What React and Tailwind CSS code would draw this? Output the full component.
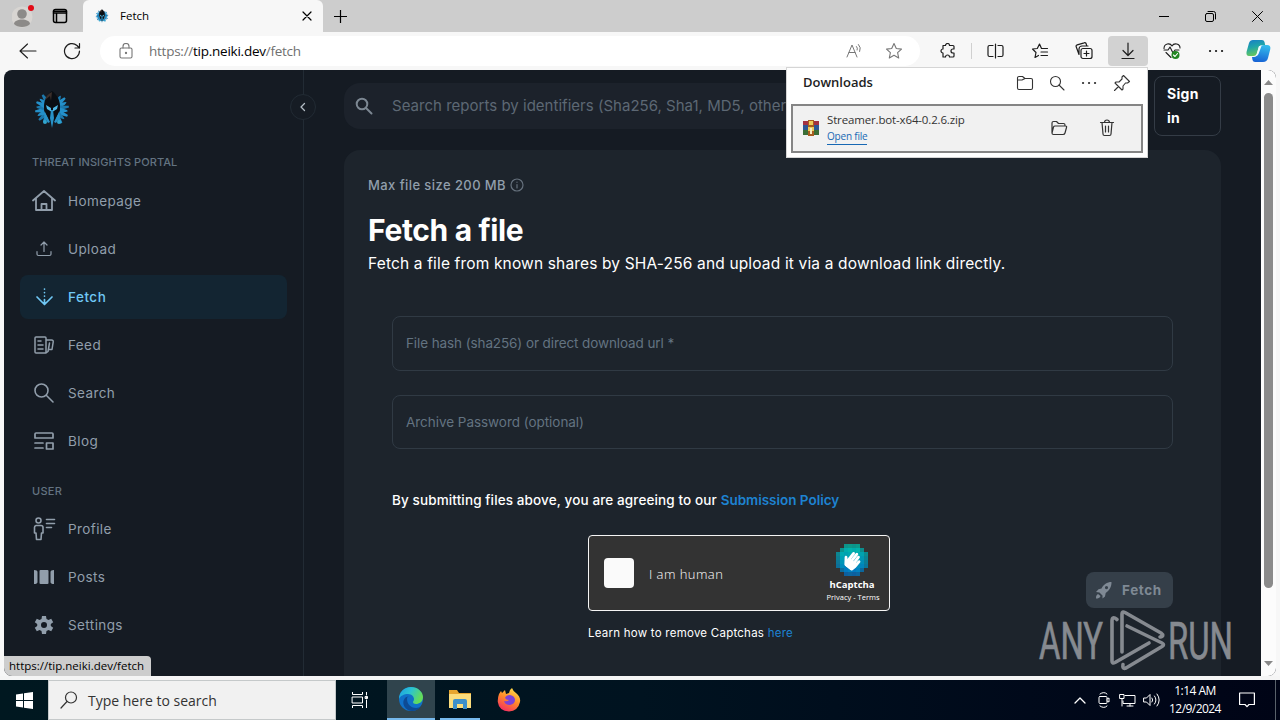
import { FaHandPaper } from 'react-icons/fa'

// Stroke icon, drawn in its own pixel units
const Icon = ({ w = 24, h = w, sw = 1, className = '', children }) => (
  <svg
    width={w}
    height={h}
    viewBox={`0 0 ${w} ${h}`}
    fill="none"
    stroke="currentColor"
    strokeWidth={sw}
    strokeLinecap="round"
    strokeLinejoin="round"
    className={`shrink-0 ${className}`}
  >
    {children}
  </svg>
)

// Feather angles round the hood, in degrees from the top
const feathers = [34, 50, 66, 82, 98, 114, 130, 146, 214, 230, 246, 262, 278, 294, 310, 326]

const Mascot = ({ size }) => (
  <svg width={size} height={size} viewBox="0 0 36 38" className="shrink-0">
    {feathers.map((angle, i) => (
      <path
        key={angle}
        d={i % 2 ? 'M15.500 11l1.500-9h2l1.500 9z' : 'M15.500 11l1.500-7 1-1 1 2 1.500 6z'}
        fill={i % 3 ? '#2490ca' : '#1c79ad'}
        transform={`rotate(${angle} 18 19)`}
      />
    ))}
    <path d="M18 1c-5 4-8 9-8 15 0 7 4 13 8 18 4-5 8-11 8-18 0-6-3-11-8-15z" fill="#0a0e13" />
    <path d="M18 2c-4 2-6 4-7 8l5-4 1 5z" fill="#3a2f2b" />
    <path d="M12 15l5 3v3.500l-4-2.500zM24 15l-5 3v3.500l4-2.500z" fill="#4fb9e6" />
    <path d="M17 20h2l1 8-2 10-2-10zM11 22l5 10-2 1-4-6zM25 22l-5 10 2 1 4-6z" fill="#2892c8" />
    <circle cx="11" cy="32" r="2" fill="#31a5ce" />
    <circle cx="25" cy="32" r="2" fill="#31a5ce" />
  </svg>
)

const TabBar = () => (
  <div className="flex h-8 shrink-0 bg-[#cdcdcd]">
    <div className="flex w-[83px] items-center rounded-br-md bg-[#cacaca] pl-3">
      <svg width="24" height="28" viewBox="0 0 24 28">
        <circle cx="10" cy="15" r="10.5" fill="#d8d5d2" />
        <circle cx="10" cy="12" r="4.800" fill="#8c8a88" />
        <path d="M2 22c0-6 16-6 16 0-3 4-13 4-16 0z" fill="#8c8a88" />
        <circle cx="19" cy="6" r="3" fill="#e20b17" />
      </svg>
      <Icon w={16} sw={1.5} className="ml-4 text-black">
        <rect x="1.5" y="1.5" width="13" height="13" rx="2" />
        <path d="M1.5 3.2h13M1.5 5h13M4.5 5v9" />
      </Icon>
    </div>
    <div className="flex w-60 items-center rounded-t-md bg-[#f7f7f7] pl-3">
      <Mascot size={14} />
      <span className="ml-[11px] flex-1 text-[11.5px] text-black">Fetch</span>
      <Icon w={10} sw={1.2} className="mr-[11px] text-black">
        <path d="M1 1l8 8M9 1l-8 8" />
      </Icon>
    </div>
    <div className="flex flex-1 items-center pl-[11px] text-black">
      <Icon w={13} sw={1.2}>
        <path d="M6.5 0v13M0 6.5h13" />
      </Icon>
      <div className="ml-auto flex items-center gap-9 pr-[17px]">
        <Icon w={10}><path d="M0 5.5h10" /></Icon>
        <Icon w={11}>
          <rect x=".5" y="2.5" width="8" height="8" rx="1.5" />
          <path d="M3 .5h5.500a2 2 0 0 1 2 2V8" />
        </Icon>
        <Icon w={11}><path d="M.5.5l10 10M10.500.5l-10 10" /></Icon>
      </div>
    </div>
  </div>
)

const Toolbar = () => (
  <div className="flex h-[38px] shrink-0 items-center bg-[#f7f7f7] text-[#1d1d1d]">
    <Icon w={18} sw={1.1} className="ml-[19px]">
      <path d="M17 9H1M8.500 2L1 9l7.500 7" />
    </Icon>
    <Icon w={18} sw={1.2} className="ml-[26px]">
      <path d="M16.500 9A7.500 7.500 0 1 1 14 3.500L16.300 6M16.500 1.500V6H12" />
    </Icon>
    <div className="ml-[19px] flex h-[30px] w-[820px] items-center rounded-full bg-white pl-[19px] pr-[17px] text-[#777]">
      <Icon w={14} h={16} sw={1.1}>
        <rect x="1" y="5" width="12" height="10" rx="1.500" />
        <path d="M4 5V3.500a3 3 0 0 1 6 0V5" />
        <circle cx="7" cy="10" r=".6" fill="currentColor" />
      </Icon>
      <span className="ml-[16px] flex-1 text-[13.5px] tracking-[-0.25px] text-[#707070]">
        https://<span className="text-black">tip.neiki.dev</span>/fetch
      </span>
      <Icon w={17} h={16} className="mr-[22px]">
        <path d="M1 14L6 2l5 12M3 9.500h6M10.500 3.500q1.500 1.500.7 3.500M12.500 1.500q3 3 1.200 7" />
      </Icon>
      <Icon w={18} sw={1.1}>
        <path d="M9 1.500l2.300 5 5.200.6-3.900 3.600 1.100 5.300L9 13.300 4.300 16l1.100-5.300L1.500 7.100l5.200-.6z" />
      </Icon>
    </div>
    <Icon w={16} sw={1.2} className="ml-5">
      <path d="M3 2.500h2.500a2 2 0 0 1 4 0H13a1 1 0 0 1 1 1V6h-1a2 2 0 0 0 0 4h1v3a1 1 0 0 1-1 1H9.500a2 2 0 0 0-4 0H3v-4a2 2 0 0 1 0-4z" />
    </Icon>
    <span className="ml-[15px] h-4 w-px bg-[#d0d0d0]" />
    <Icon w={17} h={16} sw={1.2} className="ml-[15px]">
      <path d="M6 2.500H2.500a1.500 1.500 0 0 0-1.500 1.500v8a1.500 1.500 0 0 0 1.500 1.500H6M11 2.500h3.500A1.500 1.500 0 0 1 16 4v8a1.500 1.500 0 0 1-1.500 1.500H11M8.500 1v14" />
    </Icon>
    <Icon w={18} h={16} sw={1.2} className="ml-[27px]">
      <path d="M10.500 5.500L8.500 1 6.300 5.500 1.500 6l3.500 3.500-1 5 3.500-2M10.500 5.500h6M10 9h6.500M10 12.500h6.500" />
    </Icon>
    <Icon w={18} sw={1.2} className="ml-[26px]">
      <rect x="6" y="6.500" width="11" height="10" rx="2" />
      <path d="M11.500 9v5M9 11.500h5M4 12.500L1.200 4.800a1.500 1.500 0 0 1 1-2l7-2a1.500 1.500 0 0 1 2 1l.5 2M4 12V7a3 3 0 0 1 3-3h6" />
    </Icon>
    <div className="ml-[15px] flex h-[30px] w-10 items-center justify-center rounded bg-[#d2d2d2]">
      <Icon w={16} h={18} sw={1.200}>
        <path d="M8 1v12M3 8.500L8 13.500l5-5M2 16.500h12" />
      </Icon>
    </div>
    <Icon w={18} sw={1.1} className="ml-[15px]">
      <path d="M1 6.500c0-5 6-6 8-2.500 2-3.500 8-2.500 8 2M1 8h4l2-3 3 6 2-3h4M3 10.500l5 5" />
      <circle cx="12.500" cy="13" r="4" fill="#218521" stroke="none" />
      <path d="M10.500 13l1.500 1.500 2.500-3" stroke="white" />
    </Icon>
    <Icon w={16} h={4} className="ml-[27px]">
      <path d="M2 2h.1M8 2h.1M14 2h.1" strokeWidth="2.200" />
    </Icon>
    <svg width="25" height="24" viewBox="0 0 25 24" className="ml-[22px]">
      <defs>
        <linearGradient id="cpA" x1="0" y1="0" x2=".3" y2="1">
          <stop stopColor="#177bc9" /><stop offset=".5" stopColor="#20a5a8" /><stop offset="1" stopColor="#67c75c" />
        </linearGradient>
        <linearGradient id="cpB" x1=".6" y1="0" x2=".4" y2="1">
          <stop stopColor="#34bdec" /><stop offset="1" stopColor="#1763d4" />
        </linearGradient>
      </defs>
      <path d="M7 1h9q2 0 2.500 2l.7 3h-3q-3 0-4 4l-1 4q-1 3-4 3H3q-3 0-2.500-4L3 4q1-3 4-3z" fill="url(#cpA)" />
      <path d="M18 6h3q4 0 3.300 4L22 19q-1 4-5 4H9q-2 0-2.500-2L6 18h2q3 0 4-4l1.500-5q1-3 4.500-3z" fill="url(#cpB)" />
      <path d="M13 7h2.500l-3 8q-1 2-2.500 2z" fill="#eefbff" />
    </svg>
  </div>
)

const DownloadsPopup = () => (
  <div className="absolute left-[786px] top-[67px] z-20 h-[91px] w-[362px] border border-[#d5d5d5] bg-white px-1 text-[#333]">
    <div className="flex h-9 items-center pb-[6px] pl-3">
      <span className="flex-1 text-[13px] font-semibold text-[#222]">Downloads</span>
      <Icon w={18} h={16} sw={1.1} className="mr-[15px]">
        <path d="M1.500 5V3A1.500 1.500 0 0 1 3 1.500h3.500L9 3.500h6A1.500 1.500 0 0 1 16.500 5v8a1.500 1.500 0 0 1-1.500 1.500H3A1.500 1.500 0 0 1 1.500 13zh4.500L9 3.500" />
      </Icon>
      <Icon w={16} sw={1.1} className="mr-4">
        <circle cx="6.500" cy="6.500" r="5" /><path d="M10 10l5 5" />
      </Icon>
      <Icon w={16} h={4} className="mr-4">
        <path d="M2 2h.1M8 2h.1M14 2h.1" strokeWidth="2.200" />
      </Icon>
      <Icon w={18} sw={1.1} className="mr-3">
        <path d="M10.500 1.500l6 6-2 1.500h-2L10 12v3l-1 1-7-7 1-1h3l3-3v-2zM5.500 12.500L1.500 16.500" />
      </Icon>
    </div>
    <div className="flex h-[49px] items-center border-2 border-[#858585] bg-[#f1f1f1] pb-px pl-[10px]">
      <svg width="16" height="16" viewBox="0 0 16 16">
        <path d="M0 1h16v4H0z" fill="#a43141" /><path d="M0 5h16v5H0z" fill="#2d5795" />
        <path d="M0 10h16v5H0z" fill="#3b6e36" /><path d="M5 0h6v16H5z" fill="#a85c20" />
        <path d="M6 1h4v4H6zM5 7h6v4H5z" fill="#efca5a" /><path d="M7 8h2v6H7z" fill="#f7edc2" />
      </svg>
      <div className="ml-2 w-[217px]">
        <div className="pt-[3px] text-[11.5px] leading-[15px] tracking-[-0.15px]">Streamer.bot-x64-0.2.6.zip</div>
        <div className="flex pb-[2px]">
          <span className="mt-px border-b border-[#1768b4] text-[10px] leading-[16px] tracking-[-0.2px] text-[#1768b4]">Open file</span>
        </div>
      </div>
      <Icon w={18} h={16} sw={1.2} className="ml-[6px]">
        <path d="M2 13V3a1.500 1.500 0 0 1 1.500-1.500h3l2 2h5A1.500 1.500 0 0 1 15 5v1M2 13l1.500-6q.4-1 1.500-1h10.500q1.500 0 1 1.500L15 13q-.4 1.500-2 1.500H3.500Q2 14.500 2 13z" />
      </Icon>
      <Icon w={16} h={18} sw={1.2} className="ml-[31px]">
        <path d="M1.500 3.500h13M5.500 3.500a2.500 2.500 0 0 1 5 0M3 3.500l1 11.500a1.500 1.500 0 0 0 1.500 1.500h5A1.500 1.500 0 0 0 12 15l1-11.500M6.500 7v6M9.500 7v6" />
      </Icon>
    </div>
  </div>
)

const icons = {
  home: <path d="M1 11.500l11-9.500 11 9.500M4 9v12h16V9M9.500 21V15h5v6" strokeWidth="1.800" />,
  upload: <path d="M12 14.500V5M9 8l3-3 3 3M5 14.500V17a1.500 1.500 0 0 0 1.500 1.500h11A1.500 1.500 0 0 0 19 17v-2.500" strokeWidth="1.200" />,
  fetch: <path d="M5 12l7.500 7.500 7.500-7.500M12.500 4v.1M12.500 7.500v.1M12.500 11v.1M12.500 14.500v4" strokeWidth="1.700" />,
  feed: <path d="M14 20H4a1 1 0 0 1-1-1V5a1 1 0 0 1 1-1h9a1 1 0 0 1 1 1v15zM14 7h5.500q2 0 1.700 2L20 16.500h-3.500M17.500 10L16 18.500 14 20M6 8h3M6 12h5M6 16h5" strokeWidth="1.500" />,
  search: <path d="M15.500 10a6.500 6.500 0 1 1-13 0 6.500 6.500 0 0 1 13 0zM14 15l6.500 6.500" transform="translate(.5 -.5)" strokeWidth="1.600" />,
  blog: <path d="M4 4h16a1 1 0 0 1 1 1v4H3V5a1 1 0 0 1 1-1zM3 14h8M3 19h8M14.500 14H21v6h-6.500z" strokeWidth="1.700" />,
  profile: (
    <g strokeWidth="1.600">
      <circle cx="6.500" cy="3.500" r="2.500" />
      <path d="M4 8.500h5a2 2 0 0 1 2 2V16H9.500l-.5 6.500H4.500L4 16H2.500v-5.500a2 2 0 0 1 1.500-2zM14.500 2.500h8M14.500 6.500h8M14.500 10.500h5" />
    </g>
  ),
  posts: (
    <g fill="currentColor" stroke="none">
      <path d="M2 5q3.500 0 3.500 2v10q0 2-3.500 2zM22 5q-3.500 0-3.500 2v10q0 2 3.500 2z" />
      <rect x="7.500" y="5" width="9" height="14" rx="1" />
    </g>
  ),
  settings: (
    <path
      d="M10 3h4l.5 3 2 1 2.700-1.200 2 3.400L18.800 11v2l2.400 1.800-2 3.400-2.700-1.200-2 1-.5 3h-4l-.5-3-2-1-2.700 1.200-2-3.400L5.200 13v-2L2.800 9.200l2-3.400L7.500 7l2-1zM12 9a3 3 0 1 0 0 6 3 3 0 0 0 0-6z"
      fill="currentColor"
      fillRule="evenodd"
      stroke="none"
    />
  ),
}

const portalItems = [
  ['home', 'Homepage'],
  ['upload', 'Upload'],
  ['fetch', 'Fetch'],
  ['feed', 'Feed'],
  ['search', 'Search'],
  ['blog', 'Blog'],
]

const userItems = [
  ['profile', 'Profile'],
  ['posts', 'Posts'],
  ['settings', 'Settings'],
]

const NavList = ({ items, active }) => (
  <ul className="flex flex-col gap-1">
    {items.map(([icon, label]) => (
      <li
        key={label}
        className={
          label === active
            ? 'flex h-11 items-center gap-3 rounded-lg bg-[#132532] pl-3 text-[13.5px] font-medium leading-5 tracking-[0.5px] text-[#70c8f5]'
            : 'flex h-11 items-center gap-3 rounded-lg pl-3 text-[13.5px] leading-5 tracking-[0.4px] text-[#919eab]'
        }
      >
        <Icon w={24}>{icons[icon]}</Icon>
        <span className="pb-px">{label}</span>
      </li>
    ))}
  </ul>
)

const Sidebar = () => (
  <aside className="relative w-[300px] shrink-0 border-r border-[#222b34] px-4 pt-5">
    <div className="pl-[13px]"><Mascot size={38} /></div>
    <div className="mt-[25px] mb-2 pl-3 text-[11px] font-medium leading-[18px] tracking-[0.06px] text-[#637381]">
      THREAT INSIGHTS PORTAL
    </div>
    <NavList items={portalItems} active="Fetch" />
    <div className="mt-[19px] mb-[7px] pl-3 text-[11px] font-medium leading-[18px] tracking-[0.3px] text-[#637381]">USER</div>
    <NavList items={userItems} />
    <div className="absolute -right-[13px] top-6 flex h-[26px] w-[26px] items-center justify-center rounded-full border border-[#222b34] bg-[#161c24] text-[#b3bcc5]">
      <Icon w={8} h={10} sw={1.3}><path d="M5.500 1.500L2 5l3.500 3.500" /></Icon>
    </div>
  </aside>
)

// Blocky round badge: [first column, last column] of each 4px row
const captchaRows = [[2, 5], [1, 6], [0, 7], [0, 7], [0, 7], [0, 7], [1, 6], [2, 5]]

const CaptchaLogo = () => (
  <div className="relative h-8 w-8">
    <svg width="32" height="32" viewBox="0 0 32 32" shapeRendering="crispEdges">
      {captchaRows.flatMap(([from, to], y) =>
        Array.from({ length: to - from + 1 }, (_, i) => {
          const x = from + i
          const edge = x === from || x === to || y === 0 || y === 7
          return (
            <rect
              key={`${x}-${y}`}
              x={x * 4}
              y={y * 4}
              width="4"
              height="4"
              opacity={edge ? 0.75 : 1}
              fill={`rgb(0, ${182 - y * 10 + (x % 2) * 8}, ${168 + y * 4})`}
            />
          )
        })
      )}
    </svg>
    <FaHandPaper className="absolute left-[7px] top-[7px] rotate-[38deg] text-white" size={18} />
  </div>
)

const Captcha = () => (
  <div className="flex h-[76px] w-[302px] items-center rounded border border-[#f5f5f5] bg-[#333] pl-[15px] text-white">
    <div className="h-[30px] w-[30px] rounded bg-[#fafafa]" />
    <span className="ml-[15px] flex-1 pt-[3px] font-['Open_Sans'] text-[13px] font-light tracking-[0.45px]">I am human</span>
    <div className="mr-2 flex w-[58px] flex-col items-center">
      <CaptchaLogo />
      <span className="mt-[2px] font-['Open_Sans'] text-[9.500px] font-bold leading-[13px]">hCaptcha</span>
      <span className="whitespace-nowrap pl-[2px] font-['Open_Sans'] text-[7.5px] leading-[12px]">Privacy - Terms</span>
    </div>
  </div>
)

const FetchCard = () => (
  <section className="mt-[14px] h-[600px] rounded-2xl bg-[#1d242c] px-6 pt-[25px]">
    <div className="flex items-center gap-1 text-[13px] font-medium leading-5 tracking-[0.42px] text-[#919eab]">
      Max file size 200 MB
      <Icon w={14} sw={1.2} className="text-[#66717d]">
        <circle cx="7" cy="7" r="6" /><path d="M7 6.500v3.500M7 4.200v.1" />
      </Icon>
    </div>
    <h1 className="mt-[15px] text-[30px] font-bold leading-[40px] tracking-[-0.35px] text-white">Fetch a file</h1>
    <p className="mt-[2px] text-[15.5px] leading-6 tracking-[0.155px] text-white">
      Fetch a file from known shares by SHA-256 and upload it via a download link directly.
    </p>
    <form className="mt-10 px-6">
      <div className="flex h-[55px] items-center rounded-lg border border-[#303a44] px-[13px] text-[13.5px] tracking-[-0.1px] text-[#637381]">
        File hash (sha256) or direct download url *
      </div>
      <div className="mt-6 flex h-[54px] items-center rounded-lg border border-[#303a44] px-[13px] text-[13.5px] tracking-[-0.04px] text-[#637381]">
        Archive Password (optional)
      </div>
      <p className="mt-10 text-[13.5px] font-medium leading-[22px] tracking-[0.12px] text-white">
        By submitting files above, you are agreeing to our{' '}
        <span className="font-semibold tracking-[-0.02px] text-[#1d83d2]">Submission Policy</span>
      </p>
      <div className="mt-6 flex justify-between">
        <div className="pl-[196px]">
          <Captcha />
          <p className="mt-3 text-[11.500px] leading-5 tracking-[0.24px] text-white">
            Learn how to remove Captchas <span className="text-[#1d83d2]">here</span>
          </p>
        </div>
        <div className="mt-[37px] flex h-9 w-[87px] items-center gap-2 rounded-lg bg-[#353f49] pl-2 text-[13.5px] font-bold tracking-[0.6px] text-[#7f8994]">
          <svg width="20" height="20" viewBox="0 0 20 20" fill="currentColor">
            <path fillRule="evenodd" d="M17.500 2C13 2 9.500 4.500 7.500 8.500L4.500 9.200 2 12l3.500.5 3 3L8.500 18.500l2.500-2 .7-3.500c3.500-2.500 6-6 5.800-11zM12.500 6a1.600 1.600 0 1 1 0 3.200 1.600 1.600 0 0 1 0-3.200z" />
            <path d="M4 14c-2 1-2 3-2 4.500C4 18.500 6 18 6.500 16z" />
          </svg>
          Fetch
        </div>
      </div>
    </form>
  </section>
)

const Main = () => (
  <main className="min-w-0 flex-1 overflow-hidden px-10 pt-[6px]">
    <div className="flex items-center gap-6">
      <div className="flex h-[46px] flex-1 items-center overflow-hidden rounded-2xl bg-[#1c222b] pl-[10px]">
        <Icon w={20} sw={2} className="text-[#7c8792]">
          <circle cx="8" cy="8" r="5.300" /><path d="M12 12l5.500 5.500" />
        </Icon>
        <span className="ml-[18px] whitespace-nowrap pt-px text-[15px] tracking-[0.02px] text-[#5d6874]">
          Search reports by identifiers (Sha256, Sha1, MD5, other
        </span>
      </div>
      <div className="h-[60px] w-[67px] rounded-lg border border-[#343c46] py-[5px] pl-3 text-[14px] font-bold leading-6 tracking-[0.3px] text-white">
        Sign<br />in
      </div>
    </div>
    <FetchCard />
  </main>
)

const Scrollbar = () => (
  <div className="flex w-[15px] shrink-0 flex-col items-center justify-between bg-[#fcfcfc] py-[9px]">
    <Icon w={9} h={6}><path d="M0 6L4.500 1 9 6z" fill="#888" stroke="none" /></Icon>
    <div className="mt-2 mb-auto h-[495px] w-[9px] rounded-full bg-[#8b8b8b]" />
    <Icon w={9} h={6}><path d="M0 0l4.500 5L9 0z" fill="#888" stroke="none" /></Icon>
  </div>
)

const Watermark = () => (
  <svg
    width="220"
    height="72"
    viewBox="0 0 220 72"
    className="absolute left-[1037px] top-[608px] z-20 overflow-visible text-[#868a90]"
    fontFamily="Roboto, sans-serif"
    fontSize="51"
  >
    <g fill="currentColor" stroke="currentColor" strokeWidth=".7">
      <text x="2" y="51" textLength="64" lengthAdjust="spacingAndGlyphs">ANY</text>
      <text x="131" y="51" textLength="65" lengthAdjust="spacingAndGlyphs">RUN</text>
    </g>
    <g fill="none" stroke="currentColor" strokeWidth="3.600" strokeLinejoin="round" strokeLinecap="round">
      <path d="M80 11.500q-5-4-5 1.500v40q0 3 3 1.500L112 35" />
      <path d="M85 44V6q0-3 3-1.500L124 25q4 3-1 4" />
      <path d="M90 18l35 17q3 1.500 0 3.500L89 60q-4 1.500-3-3.500" />
    </g>
  </svg>
)

const Taskbar = () => (
  <div className="flex h-10 shrink-0 items-center bg-linear-to-r from-[#001820] via-[#001320] to-[#000416] font-['Open_Sans'] text-white">
    <div className="flex w-12 justify-center">
      <svg width="17" height="17" viewBox="0 0 17 17" fill="white">
        <path d="M0 2.500L7 1.500V8H0zM8 1.300L17 0v8H8zM0 9h7v6.500l-7-1zM8 9h9v8l-9-1.300z" />
      </svg>
    </div>
    <div className="flex h-10 w-[288px] items-center border border-[#c5c9ca] bg-[#f1f1f1] pl-[11px] text-[#333]">
      <Icon w={18} sw={1.2}><circle cx="11" cy="6.500" r="5.500" /><path d="M7 10.500L1 17" /></Icon>
      <span className="ml-[10px] pt-px text-[14px]">Type here to search</span>
    </div>
    <div className="flex w-[51px] justify-center">
      <Icon w={18} h={16} className="ml-[-3px]">
        <path d="M1.500 0v2.500h10V0M1.500 16v-2.500h10V16M1.500 5h10v6h-10zM15.500 0v3M15.500 8v8" />
        <path d="M14.500 4.500h2v2h-2z" fill="currentColor" />
      </Icon>
    </div>
    <div className="flex h-10 w-12 items-center justify-center border-b-2 border-[#76b9ed] bg-[#30444d]">
      <svg width="24" height="24" viewBox="0 0 24 24">
        <defs>
          <linearGradient id="edTop" x1="0" y1="0" x2="1" y2=".4">
            <stop stopColor="#1b9de2" /><stop offset=".5" stopColor="#2bc3d2" /><stop offset="1" stopColor="#64dc58" />
          </linearGradient>
        </defs>
        <circle cx="12" cy="12" r="12" fill="#1070c8" />
        <path d="M0 12C0 5 5 0 12 0s12 5 12 10-4 7-7 7c-2 0-3-1-3-2s1-1 1-3-2-5-6-5-8 2-9 5z" fill="url(#edTop)" />
        <path d="M8 12c0 6 5 9 9 9 2 0 4-1 5-2-3 5-9 6-13 4-5-3-6-8-3-12 1-1 3-2 5-2-2 0-3 1-3 3z" fill="#0d4a94" />
      </svg>
    </div>
    <div className="ml-[5px] flex h-10 w-10 items-center justify-center border-b-2 border-[#76b9ed]">
      <svg width="22" height="19" viewBox="0 0 22 19">
        <path d="M0 0h8l2 3h12v15H0z" fill="#e7a52e" />
        <path d="M0 4h22v14H0z" fill="#fbdc7c" />
        <path d="M4 11q0-2 2-2h10q2 0 2 2v8h-4v-5H8v5H4z" fill="#3d8fc9" />
      </svg>
    </div>
    <div className="flex w-[58px] justify-center">
      <svg width="24" height="24" viewBox="0 0 24 24">
        <defs>
          <linearGradient id="ff" x1=".8" y1="0" x2=".3" y2="1">
            <stop stopColor="#ffe24a" /><stop offset=".5" stopColor="#ff8a2a" /><stop offset="1" stopColor="#f52d62" />
          </linearGradient>
        </defs>
        <path d="M2 6l2-3 1 2 3-3 1 4 3-1q0-3 3-5 1 3 4 5 5 4 4 9-2 9-11 9.500Q2 23 .8 14 .5 10 2 6z" fill="url(#ff)" />
        <path d="M8 10q1-3 5-3 5 1 5 5t-5 5q-5 0-6-4 3 1 5-1-3 0-4-2z" fill="#7c42d8" />
      </svg>
    </div>
    <div className="ml-auto flex items-center">
      <Icon w={12} h={8} sw={1.300} className="mr-[11px]"><path d="M1 7l5-5 5 5" /></Icon>
      <Icon w={14} h={16} className="mr-[8px]">
        <path d="M3 2q4-3 7 0M3 14q4 3 7 0" /><rect x="2" y="4.500" width="8" height="7" rx="1" /><path d="M10 7l2-1v4l-2-1" />
      </Icon>
      <Icon w={17} h={14} className="mr-[7px]">
        <path d="M6 2.500h10v8H4V8M8 13h6M11 10.500V13M1 1.500h4v4H1zM3 5.500V13" />
      </Icon>
      <Icon w={17} h={14} className="mr-[8px]">
        <path d="M1 5h2.500L7 1.500v11L3.500 9H1zM9 5q1.500 2 0 4M11.500 3q3 4 0 8M14 1q4.500 6 0 12" />
      </Icon>
      <div className="w-[54px] text-center text-[12px] leading-[18px] tracking-[-0.55px]">
        <div>1:14 AM</div>
        <div>12/9/2024</div>
      </div>
      <Icon w={16} sw={1.200} className="ml-[17px] mr-5">
        <path d="M.6 1h14.800v11.500H10L8 14.700 6 12.500H.6z" />
      </Icon>
      <span className="mr-1 h-10 w-px bg-[#59616a]" />
    </div>
  </div>
)

const App = () => (
  <div className="relative flex h-[720px] w-[1280px] flex-col overflow-hidden bg-[#f7f7f7] font-['Open_Sans']">
    <TabBar />
    <Toolbar />
    <div className="relative mx-1 flex h-[606px] shrink-0 overflow-hidden rounded-lg bg-[#151b23] font-['Inter']">
      <Sidebar />
      <Main />
      <Scrollbar />
      <div className="absolute bottom-0 left-0 z-10 h-5 w-[147px] rounded-tr bg-[#cdcdcd] pl-[5px] font-['Open_Sans'] text-[11.500px] leading-5 text-black">
        https://tip.neiki.dev/fetch
      </div>
    </div>
    <div className="h-1 shrink-0 bg-[#f5f5f5]" />
    <Taskbar />
    <DownloadsPopup />
    <Watermark />
  </div>
)

export default App
